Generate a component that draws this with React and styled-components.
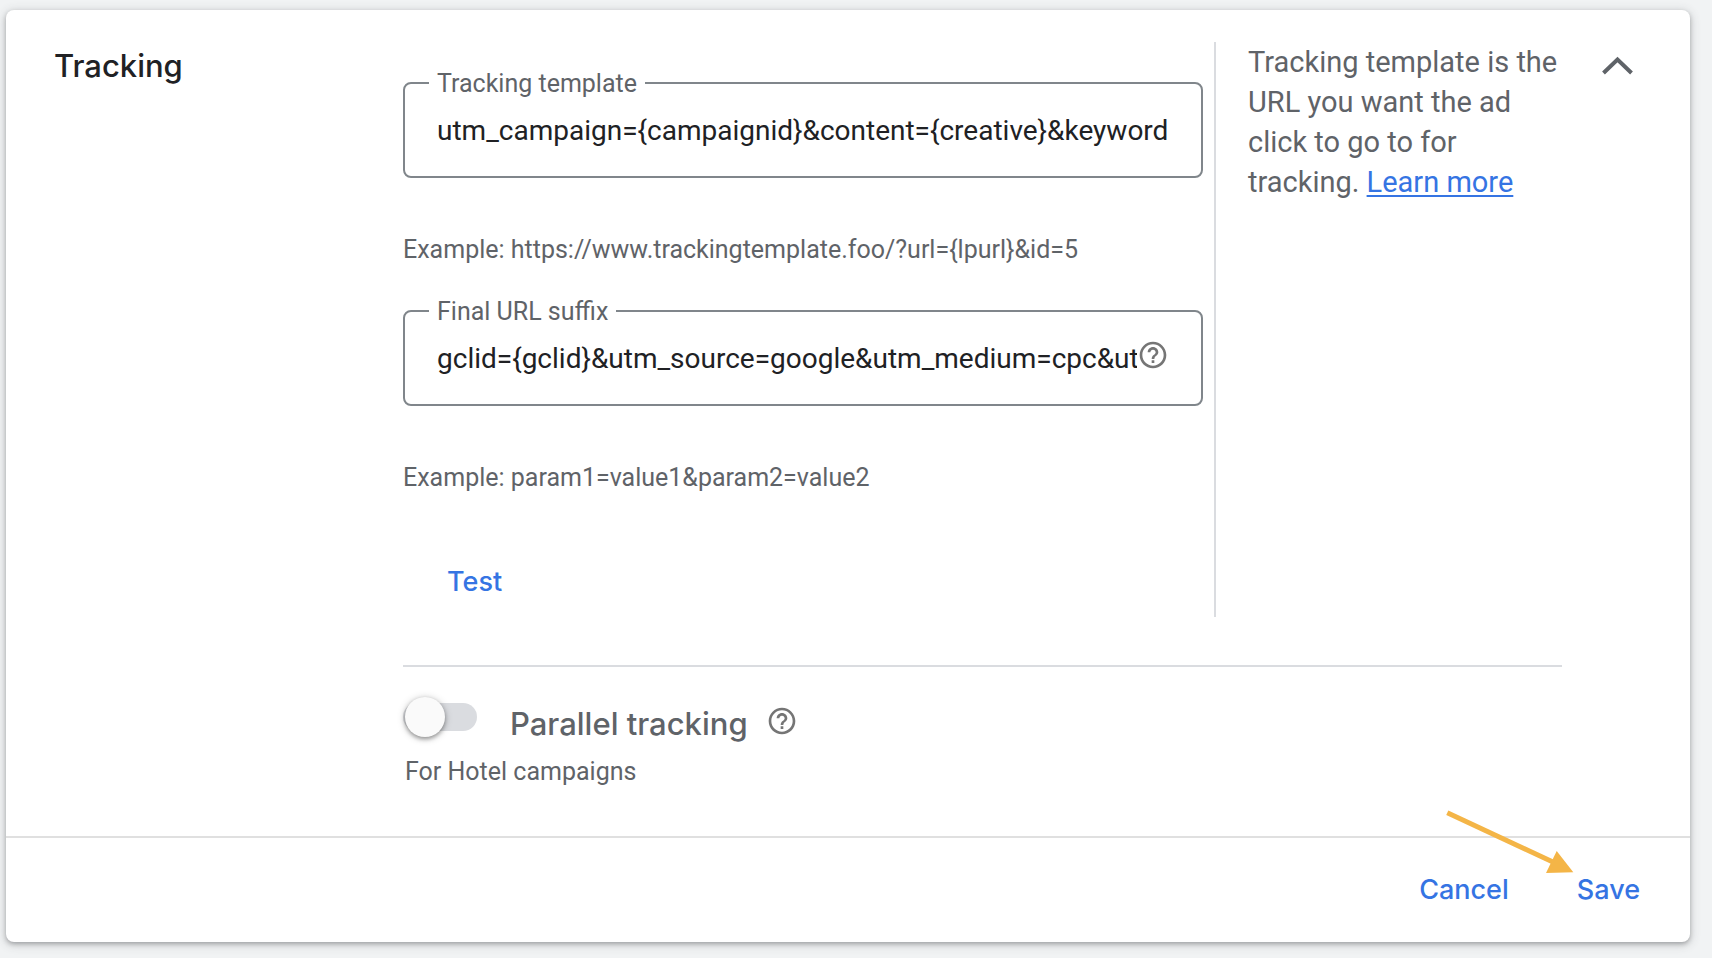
import React, { Component } from 'react';
import styled, { createGlobalStyle } from 'styled-components';

const GlobalStyle = createGlobalStyle`
  * {
    box-sizing: border-box;
  }
  body {
    margin: 0;
    background-color: #f1f3f4;
    font-family: Roboto, sans-serif;
    color: #5f6368;
  }
`;
const Page = styled.main`
  padding: 10px 22px 16px 6px;
`;
const Card = styled.form`
  background-color: white;
  border-radius: 8px;
  box-shadow: 0 2px 4px rgba(60, 64, 67, 0.35),
    0 2px 10px 2px rgba(60, 64, 67, 0.16);
`;
const Body = styled.div`
  display: grid;
  grid-template-columns: 349px minmax(0, 1fr) 96px;
  padding: 32px 32px 48px 48px;
`;
const Title = styled.h2`
  margin: 0;
  font-family: Inter, sans-serif;
  font-size: 31px;
  font-weight: 500;
  line-height: 48px;
  color: #202124;
`;
const Columns = styled.div`
  display: flex;
  gap: 11px;
`;
const Fields = styled.div`
  flex: 1;
  min-width: 0;
  padding-top: 40px;
`;
const Field = styled.div`
  position: relative;
  display: flex;
  align-items: center;
  height: 96px;
  padding: 0 32px;
  border: 2px solid #80868b;
  border-radius: 8px;
`;
const FieldLabel = styled.label`
  position: absolute;
  top: -16px;
  left: 24px;
  padding: 0 8px;
  background-color: white;
  font-size: 25px;
  line-height: 32px;
`;
const Input = styled.input`
  flex: 1;
  min-width: 0;
  padding: 2px 0 0;
  border: 0;
  outline: 0;
  background: transparent;
  font-family: inherit;
  font-size: 28px;
  line-height: 40px;
  color: #202124;
`;
const Hint = styled.p`
  margin: 56px 0 44px;
  font-size: 25px;
  line-height: 32px;
`;
const TestRow = styled.div`
  padding: 7px 0 0 20px;
`;
const TextButton = styled.button`
  height: 72px;
  padding: 0 24px;
  border: 0;
  background: transparent;
  font-family: Inter, sans-serif;
  font-size: 27px;
  font-weight: 500;
  color: #3574e3;
  cursor: pointer;
`;
const IconButton = styled.button`
  display: flex;
  flex-shrink: 0;
  align-items: center;
  padding: 0 0 ${props => props.$lift || '0'};
  border: 0;
  background: transparent;
  color: ${props => props.$color || '#5f6368'};
  cursor: pointer;
`;
const Help = styled.aside`
  width: 348px;
  padding-left: 32px;
  border-left: 2px solid #dadce0;
  font-size: 29px;
  line-height: 40px;
  p {
    margin: 0;
  }
  a {
    color: #3574e3;
    text-decoration-thickness: 2px;
    text-underline-offset: 3px;
  }
`;
const Collapse = styled.div`
  padding-left: 32px;
`;
const Parallel = styled.section`
  margin-top: 48px;
  padding-top: 30px;
  border-top: 2px solid #dadce0;
`;
const ToggleRow = styled.div`
  display: flex;
  height: 53px;
`;
const Toggle = styled.input`
  appearance: none;
  position: relative;
  width: 74px;
  height: 28px;
  margin: 6px 33px 0 0;
  border-radius: 14px;
  background-color: #dadce0;
  cursor: pointer;
  &:before {
    content: '';
    position: absolute;
    top: -6px;
    left: ${props => (props.checked ? '34px' : '2px')};
    width: 40px;
    height: 40px;
    border-radius: 50%;
    background-color: #fafafa;
    box-shadow: 0 2px 4px rgba(0, 0, 0, 0.35), 0 1px 8px rgba(0, 0, 0, 0.2);
  }
`;
const ToggleLabel = styled.label`
  margin-right: 18px;
  font-family: Inter, sans-serif;
  font-size: 31px;
  font-weight: 500;
  line-height: 53px;
`;
const Note = styled.p`
  margin: 6px 2px 0;
  font-size: 25px;
  line-height: 32px;
`;
const Footer = styled.footer`
  position: relative;
  display: flex;
  align-items: center;
  justify-content: flex-end;
  gap: 20px;
  height: 106px;
  padding: 0 26px 2px 0;
  border-top: 2px solid #e0e0e0;
`;
const Pointer = styled.svg`
  position: absolute;
  top: -32px;
  right: 110px;
  pointer-events: none;
`;

const HelpIcon = () => (
  <svg width="32" height="32" viewBox="0 0 24 24" fill="currentColor">
    <path d="M11 18h2v-2h-2v2zm1-16C6.48 2 2 6.48 2 12s4.48 10 10 10 10-4.48 10-10S17.52 2 12 2zm0 18c-4.41 0-8-3.59-8-8s3.59-8 8-8 8 3.59 8 8-3.59 8-8 8zm0-14c-2.21 0-4 1.79-4 4h2c0-1.1.9-2 2-2s2 .9 2 2c0 2-3 1.75-3 5h2c0-2.25 3-2.5 3-5 0-2.21-1.79-4-4-4z" />
  </svg>
);

const HelpButton = ({ label }) => (
  <IconButton type="button" aria-label={label} $color="#757575" $lift="6px">
    <HelpIcon />
  </IconButton>
);

class App extends Component {
  constructor(props) {
    super(props);
    this.state = {
      template: 'utm_campaign={campaignid}&content={creative}&keyword',
      suffix: 'gclid={gclid}&utm_source=google&utm_medium=cpc&ut',
      parallel: false
    };
  }

  render = () => {
    return (
      <Page>
        <GlobalStyle />
        <Card onSubmit={e => e.preventDefault()}>
          <Body>
            <Title>Tracking</Title>
            <div>
              <Columns>
                <Fields>
                  <Field>
                    <FieldLabel htmlFor="template">Tracking template</FieldLabel>
                    <Input
                      id="template"
                      type="text"
                      value={this.state.template}
                      onChange={e => this.setState({ template: e.target.value })}
                    />
                  </Field>
                  <Hint>
                    {'Example: https://www.trackingtemplate.foo/?url={lpurl}&id=5'}
                  </Hint>
                  <Field>
                    <FieldLabel htmlFor="suffix">Final URL suffix</FieldLabel>
                    <Input
                      id="suffix"
                      type="text"
                      value={this.state.suffix}
                      onChange={e => this.setState({ suffix: e.target.value })}
                    />
                    <HelpButton label="About final URL suffix" />
                  </Field>
                  <Hint>{'Example: param1=value1&param2=value2'}</Hint>
                  <TestRow>
                    <TextButton type="button">Test</TextButton>
                  </TestRow>
                </Fields>
                <Help>
                  <p>
                    Tracking template is the URL you want the ad click to go to
                    for tracking. <a href="#learn">Learn more</a>
                  </p>
                </Help>
              </Columns>
              <Parallel>
                <ToggleRow>
                  <Toggle
                    id="parallel"
                    type="checkbox"
                    role="switch"
                    checked={this.state.parallel}
                    onChange={e => this.setState({ parallel: e.target.checked })}
                  />
                  <ToggleLabel htmlFor="parallel">Parallel tracking</ToggleLabel>
                  <HelpButton label="About parallel tracking" />
                </ToggleRow>
                <Note>For Hotel campaigns</Note>
              </Parallel>
            </div>
            <Collapse>
              <IconButton type="button" aria-label="Collapse">
                <svg width="48" height="48" viewBox="0 0 48 48" fill="none">
                  <path
                    d="M9.5 31L23.5 17.5L37.5 31"
                    stroke="currentColor"
                    strokeWidth="4"
                  />
                </svg>
              </IconButton>
            </Collapse>
          </Body>
          <Footer>
            <TextButton type="button">Cancel</TextButton>
            <TextButton type="submit">Save</TextButton>
            <Pointer width="140" height="74" viewBox="0 0 140 74">
              <path d="M7.3 6.8L114 56.5" stroke="#f4b547" strokeWidth="5" />
              <path d="M133.3 66.3L116.7 45L106 67z" fill="#f4b547" />
            </Pointer>
          </Footer>
        </Card>
      </Page>
    );
  };
}
export default App;
